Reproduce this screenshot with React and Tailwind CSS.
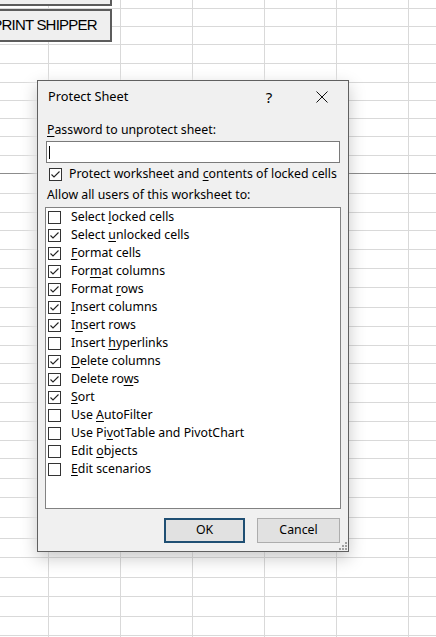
import React from "react";

const H = {
  9: "h-[9px]",
  18: "h-[18px]",
  19: "h-[19px]",
  20: "h-[20px]",
  21: "h-[21px]",
};

// row heights so the grid lines land where the sheet has them
const rows = [
  9, 18, 18, 19, 19, 18, 18, 18, 19, 18, 20, 19, 18, 19, 19, 19, 20, 19, 19,
  18, 20, 19, 19, 19, 18, 20, 19, 20, 21, 19, 20, 19, 20, 19, 20,
];

const items = [
  { pre: "Select ", key: "l", post: "ocked cells", on: false },
  { pre: "Select ", key: "u", post: "nlocked cells", on: true },
  { pre: "", key: "F", post: "ormat cells", on: true },
  { pre: "For", key: "m", post: "at columns", on: true },
  { pre: "Format ", key: "r", post: "ows", on: true },
  { pre: "", key: "I", post: "nsert columns", on: true },
  { pre: "I", key: "n", post: "sert rows", on: true },
  { pre: "Insert ", key: "h", post: "yperlinks", on: false },
  { pre: "", key: "D", post: "elete columns", on: true },
  { pre: "Delete ro", key: "w", post: "s", on: true },
  { pre: "", key: "S", post: "ort", on: true },
  { pre: "Use ", key: "A", post: "utoFilter", on: false },
  { pre: "Use Pi", key: "v", post: "otTable and PivotChart", on: false },
  { pre: "Edit ", key: "o", post: "bjects", on: false },
  { pre: "", key: "E", post: "dit scenarios", on: false },
];

function Check({ on }) {
  return (
    <div className="w-[13px] h-[13px] shrink-0 border border-[#333] bg-white flex items-center justify-center">
      {on && (
        <svg width="11" height="11" viewBox="0 0 11 11">
          <path d="M1.5 5.5 L4 8 L9.5 2.5" fill="none" stroke="#222" strokeWidth="1.1" />
        </svg>
      )}
    </div>
  );
}

function Key({ pre, k, post }) {
  return (
    <span className="whitespace-nowrap">
      {pre}
      <span className="underline underline-offset-2 decoration-1">{k}</span>
      {post}
    </span>
  );
}

export default function App() {
  return (
    <div className="relative w-[436px] h-[637px] overflow-hidden bg-white">
      {/* sheet grid */}
      <div className="flex flex-col">
        {rows.map((h, i) => (
          <div
            key={i}
            className={`flex shrink-0 border-b ${H[h]} ${
              i === 9 ? "border-[#8c8c8c]" : "border-[#d9d9d9]"
            }`}
          >
            <div className="w-[49px] shrink-0 border-r border-[#d9d9d9]" />
            {[0, 1, 2, 3, 4, 5, 6].map((c) => (
              <div key={c} className="w-[72px] shrink-0 border-r border-[#d9d9d9]" />
            ))}
          </div>
        ))}
      </div>

      {/* sheet buttons */}
      <div className="absolute left-[-23px] top-[-30px] w-[135px] h-[36px] border-2 border-[#5c5c5c] bg-[#efefef]" />
      <div
        className="absolute left-[-23px] top-[9px] w-[135px] h-[33px] border-2 border-[#5c5c5c] bg-[#efefef] flex items-center justify-center text-[15px] tracking-[-0.8px] text-black"
        style={{ fontFamily: '"Liberation Sans", Arial, sans-serif' }}
      >
        PRINT SHIPPER
      </div>

      {/* dialog */}
      <div
        className="absolute left-[37px] top-[80px] w-[312px] h-[472px] border border-[#606060] bg-[#f0f0f0] flex flex-col text-[12.3px] text-black shadow-[0_6px_16px_rgba(0,0,0,0.22),-6px_0_10px_rgba(255,255,255,0.9)]"
        style={{ fontFamily: '"Noto Sans", "Open Sans", sans-serif' }}
      >
        <div className="h-[32px] shrink-0 flex items-center pl-[10px]">
          <span className="flex-1 text-[12.8px]">Protect Sheet</span>
          <span className="text-[15px] w-[20px] text-center mr-[37px]">?</span>
          <svg width="12" height="12" viewBox="0 0 12 12" className="mr-[20px]">
            <path d="M0.5 0.5 L11.5 11.5 M11.5 0.5 L0.5 11.5" stroke="#111" strokeWidth="1" />
          </svg>
        </div>

        <div className="mt-[9px] ml-[9px] leading-[16px]">
          <Key pre="" k="P" post="assword to unprotect sheet:" />
        </div>
        <div className="mt-[3px] mx-[8px] h-[22px] shrink-0 border border-[#7a7a7a] bg-white flex items-center pl-[2px]">
          <div className="w-[1px] h-[13px] bg-black" />
        </div>

        <div className="mt-[3px] ml-[11px] h-[16px] flex items-center gap-[7px] leading-[16px]">
          <Check on />
          <Key pre="Protect worksheet and " k="c" post="ontents of locked cells" />
        </div>

        <div className="mt-[5px] ml-[9px] leading-[16px]">Allow all users of this worksheet to:</div>

        <div className="mt-[4px] mx-[7px] h-[302px] shrink-0 border border-[#828282] bg-white flex flex-col">
          {items.map((it, i) => (
            <div key={i} className="h-[18px] shrink-0 flex items-center pl-[2px] gap-[10px] leading-[16px]">
              <Check on={it.on} />
              <Key pre={it.pre} k={it.key} post={it.post} />
            </div>
          ))}
        </div>

        <div className="mt-[9px] flex justify-end gap-[12px] pr-[8px]">
          <button className="w-[81px] h-[25px] border-2 border-[#1f4f73] bg-[#e1e1e1] text-[12.3px]">
            OK
          </button>
          <button className="w-[83px] h-[25px] border border-[#adadad] bg-[#e1e1e1] text-[12.3px]">
            Cancel
          </button>
        </div>

        <svg width="8" height="8" viewBox="0 0 8 8" className="absolute right-[1px] bottom-[1px]">
          <rect x="6" y="0" width="2" height="2" fill="#a0a0a0" />
          <rect x="3" y="3" width="2" height="2" fill="#a0a0a0" />
          <rect x="6" y="3" width="2" height="2" fill="#a0a0a0" />
          <rect x="0" y="6" width="2" height="2" fill="#a0a0a0" />
          <rect x="3" y="6" width="2" height="2" fill="#a0a0a0" />
          <rect x="6" y="6" width="2" height="2" fill="#a0a0a0" />
        </svg>
      </div>
    </div>
  );
}
